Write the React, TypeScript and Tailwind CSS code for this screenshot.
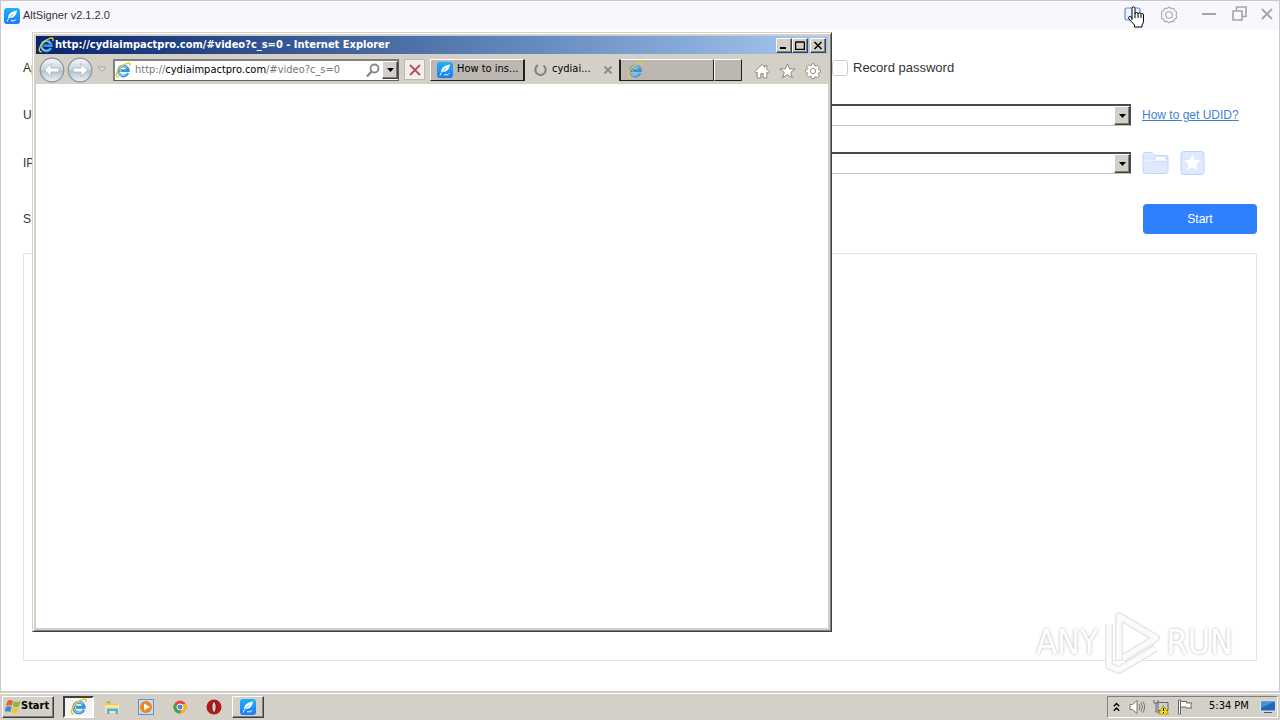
import type { ReactNode } from "react";

const tahoma = "font-['DejaVu_Sans_Condensed','DejaVu_Sans',sans-serif]";
const raised =
  "border border-t-white border-l-white border-r-[#404040] border-b-[#404040] bg-[#d4d0c8] shadow-[inset_-1px_-1px_0_#808080]";

function FeatherIcon({ size = 16 }: { size?: number }) {
  return (
    <svg width={size} height={size} viewBox="0 0 16 16" aria-hidden="true" className="shrink-0">
      <defs>
        <linearGradient id="feather" x1="0" y1="0" x2="0" y2="1">
          <stop offset="0" stopColor="#1fb0ff" />
          <stop offset="1" stopColor="#1c7cf4" />
        </linearGradient>
      </defs>
      <rect width="16" height="16" rx="3" fill="url(#feather)" />
      <path d="M13 2.500C8.500 3 5 5 4.300 8.500L3.800 11l1.200-1c4.300.2 7.300-2.200 8-7.500z" fill="#fff" />
      <path d="M3 13.500C4.600 10.300 6.800 8 9.500 6.200" stroke="#2494fb" strokeWidth=".7" fill="none" />
      <path d="M3 13.500l1.500-3" stroke="#fff" strokeWidth=".9" fill="none" />
      <path d="M7 12.800h3.700l1.300-1.500" stroke="#fff" strokeWidth="1" fill="none" />
    </svg>
  );
}

function ExplorerIcon({ size = 16 }: { size?: number }) {
  return (
    <svg width={size} height={size} viewBox="0 0 16 16" aria-hidden="true" className="shrink-0">
      <path
        d="M13 11A5 5 0 1 1 13.400 8.700H5.500"
        fill="none"
        stroke="#3493dc"
        strokeWidth="2.700"
      />
      <path d="M12.300 11.300A4.900 4.900 0 0 1 3.500 10M4.200 6.300a4.700 4.700 0 0 1 7.800-.5" fill="none" stroke="#7fd0f7" strokeWidth="1.100" />
      <path
        d="M3.800 14.700C-.5 15.500.8 9.500 6 4.800 10 1.300 14.300.1 15 1.700c.3.800.1 1.500-.3 2.300"
        fill="none"
        stroke="#f0c630"
        strokeWidth="1.400"
      />
    </svg>
  );
}

function GearIcon({ size, stroke, fill }: { size: number; stroke: string; fill: string }) {
  return (
    <svg width={size} height={size} viewBox="0 0 18 18" aria-hidden="true" fill={fill} stroke={stroke}>
      <path d="M7.500 1h3l.5 2.200 1.200.5 1.900-1.200 2.100 2.100L15 6.500l.5 1.200 2 .4v2.600l-2.100.5-.5 1.200 1.200 1.900-2.100 2.100-1.800-1.200-1.300.5-.4 1.800h-3L7 15.200l-1.200-.5-1.900 1.200-2-2.100L3 12l-.5-1.200-2-.5V7.700l2.100-.4L3 6 1.900 4.200 4 2.100l1.800 1.200L7 2.900z" />
      <circle cx="9" cy="9" r="3" />
    </svg>
  );
}

function DownArrow() {
  return (
    <svg width="7" height="4" viewBox="0 0 7 4" aria-hidden="true">
      <path d="M0 0h7L3.500 4z" fill="#000" />
    </svg>
  );
}

function Combo({ id }: { id: string }) {
  return (
    <div className="grid h-[22px] flex-1 grid-rows-1 border border-t-2 border-[#c4c4c4] border-t-[#4a4a4a] border-r-[#505050]">
      <select id={id} className="col-start-1 row-start-1 h-full w-full appearance-none bg-white outline-none" />
      <span
        className={`${raised} pointer-events-none col-start-1 row-start-1 flex w-4 items-center justify-center justify-self-end`}
      >
        <DownArrow />
      </span>
    </div>
  );
}

function AltSigner() {
  return (
    <main className="flex flex-1 flex-col border border-b-0 border-[#c9c9cc] bg-white font-['Liberation_Sans',Arial,sans-serif] text-[12px] text-[#333]">
      <header className="flex h-[29px] shrink-0 items-center bg-[#f8f8fc] pr-[6px] pl-[3px]">
        <FeatherIcon />
        <h1 className="ml-[3px] flex-1 text-[11px]">AltSigner v2.1.2.0</h1>
        <div className="flex items-center pb-1 text-[#a3a3a8]">
          <button aria-label="Tutorial" className="mr-[19px]">
            <svg width="17" height="14" viewBox="0 0 17 14" fill="#eef4ff" stroke="#5b8bd8" strokeWidth="1.200">
              <rect x="1" y="1" width="15" height="12" rx="2" />
              <path d="M8.500 1v12" />
            </svg>
          </button>
          <button aria-label="Settings" className="mr-6 pt-[2px]">
            <svg width="18" height="18" viewBox="0 0 18 18" fill="none" stroke="#aaa" strokeWidth="1.100">
              <path d="M9 1l2 1.500 2.500-.2 1 2.300 2.100 1.300L16.200 9l.4 3-2.100 1.300-1 2.300-2.500-.2L9 17l-2-1.600-2.500.2-1-2.300L1.400 12 1.800 9l-.4-3 2.100-1.400 1-2.300 2.500.2z" strokeLinejoin="round" />
              <circle cx="9" cy="9" r="3.300" />
            </svg>
          </button>
          <button aria-label="Minimize" className="mr-4">
            <svg width="14" height="16" viewBox="0 0 14 16" stroke="currentColor" strokeWidth="2">
              <path d="M0 8h14" />
            </svg>
          </button>
          <button aria-label="Restore" className="mr-[14px]">
            <svg width="15" height="16" viewBox="0 0 15 16" fill="none" stroke="currentColor" strokeWidth="1.600">
              <path d="M1 5h9v9H1zM4.500 5V1H14v9.500h-4" />
            </svg>
          </button>
          <button aria-label="Close">
            <svg width="12" height="16" viewBox="0 0 12 16" stroke="currentColor" strokeWidth="1.800">
              <path d="M1 3l10 10M11 3L1 13" />
            </svg>
          </button>
        </div>
      </header>

      <div className="flex flex-1 flex-col px-[22px] pt-[26px] pb-[30px]">
        <div className="flex h-6 items-center">
          <label htmlFor="account" className="w-20">Ap</label>
          <input id="account" className="min-w-0 flex-1 outline-none" />
        </div>
        <div className="mt-6 flex h-[22px] items-center">
          <label htmlFor="udid" className="w-20">U</label>
          <Combo id="udid" />
          <a href="#udid" className="ml-[11px] w-[115px] text-[#3f7fd0] underline">
            How to get UDID?
          </a>
        </div>
        <div className="mt-[26px] flex h-[22px] items-center">
          <label htmlFor="ipa" className="w-20">IP</label>
          <Combo id="ipa" />
          <div className="ml-[11px] flex w-[115px] items-center gap-[11px]">
            <button aria-label="Open file">
              <svg width="27" height="24" viewBox="0 0 27 24" fill="#dfe9fd" stroke="#c3d5fa">
                <path d="M1 3.500Q1 1.500 3 1.500h7l3 3h11q2 0 2 2V20q0 2.500-2.500 2.500h-20Q1 22.500 1 20z" />
                <rect x="13" y="5" width="11" height="5" rx="1.500" fill="#fff" />
                <path d="M1.500 9.500h24" stroke="#e9f0fe" />
              </svg>
            </button>
            <button aria-label="Favorites">
              <svg width="25" height="24" viewBox="0 0 25 24" fill="#dfe9fd" stroke="#bed2fa">
                <rect x="1" y=".5" width="23" height="23" rx="3" />
                <path d="M12.500 3.500l2.400 5.300 5.800.7-4.300 3.900 1.200 5.700-5.100-2.900-5.100 2.900 1.200-5.700-4.300-3.900 5.800-.7z" fill="#fff" stroke="none" />
              </svg>
            </button>
          </div>
        </div>
        <div className="mt-[30px] flex h-[30px] items-center justify-between">
          <span>S</span>
          <button className="h-[30px] w-[114px] rounded bg-[#2f80ff] text-white">Start</button>
        </div>
        <section aria-label="Log" className="mt-[19px] flex-1 border border-[#e2e2e4]" />
      </div>
    </main>
  );
}

function NavArrow({ back = false }: { back?: boolean }) {
  return (
    <svg width="26" height="26" viewBox="0 0 26 26" aria-hidden="true">
      <defs>
        <linearGradient id="orb" x1="0" y1="0" x2="0" y2="1">
          <stop offset="0" stopColor="#f4f7fa" />
          <stop offset=".45" stopColor="#cdd7e0" />
          <stop offset=".55" stopColor="#b4c3d0" />
          <stop offset="1" stopColor="#e6f5fb" />
        </linearGradient>
      </defs>
      <circle cx="13" cy="13" r="11.800" fill="url(#orb)" stroke="#8b949c" strokeWidth="1.200" />
      <path
        d={back ? "M5.500 13l6.500-6.500V11h8v4h-8v4.500z" : "M20.500 13L14 6.500V11H6v4h8v4.500z"}
        fill="#fff"
        stroke="#a4b2bf"
        strokeWidth=".8"
      />
    </svg>
  );
}

function CaptionButton({ label, children }: { label: string; children: ReactNode }) {
  return (
    <button aria-label={label} className={`${raised} flex h-[15px] w-4 items-center justify-center`}>
      <svg width="10" height="9" viewBox="0 0 10 9" fill="none" stroke="#000">
        {children}
      </svg>
    </button>
  );
}

function Browser() {
  return (
    <section
      aria-label="Internet Explorer"
      className={`absolute top-8 left-8 flex h-[600px] w-[800px] flex-col border border-t-[#d4d0c8] border-l-[#d4d0c8] border-r-[#404040] border-b-[#404040] bg-[#d4d0c8] p-[3px] text-[11px] text-black shadow-[inset_1px_1px_0_#fff,inset_-1px_-1px_0_#808080] ${tahoma}`}
    >
      <div className="flex h-[18px] shrink-0 items-center bg-linear-to-r from-[#0a246a] to-[#a6caf0] pr-[2px] pl-[2px] text-white">
        <ExplorerIcon />
        <h2 className="ml-[1px] flex-1 font-bold whitespace-nowrap">
          http://cydiaimpactpro.com/#video?c_s=0 - Internet Explorer
        </h2>
        <CaptionButton label="Minimize window">
          <path d="M1 7h6" strokeWidth="2" />
        </CaptionButton>
        <CaptionButton label="Maximize window">
          <path d="M.5 1h9M.5 1v7.500h9V1" strokeWidth="1.500" />
        </CaptionButton>
        <span className="w-[2px]" />
        <CaptionButton label="Close window">
          <path d="M1.500 1l7 7M8.500 1l-7 7" strokeWidth="1.500" />
        </CaptionButton>
      </div>

      <div className="flex h-[30px] shrink-0 items-center pt-[1px] pl-[3px]">
        <button aria-label="Back"><NavArrow back /></button>
        <button aria-label="Forward" className="ml-[2px]"><NavArrow /></button>
        <button aria-label="Recent pages" className="ml-1">
          <svg width="10" height="7" viewBox="0 0 10 7" fill="#e4e2dd" stroke="#aaa59c">
            <path d="M1 1h8L5 5.500z" />
          </svg>
        </button>
        <form className="ml-[6px] flex h-[22px] w-[286px] items-center border border-t-2 border-l-2 border-[#808080] border-r-[#606060] border-b-[#606060] bg-white">
          <ExplorerIcon />
          <div className="ml-1 flex-1 whitespace-nowrap text-[#777]">
            http://<span className="text-black">cydiaimpactpro.com</span>/#video?c_s=0
          </div>
          <button type="button" aria-label="Search" className="mr-[2px]">
            <svg width="14" height="15" viewBox="0 0 14 15" fill="none" stroke="#858585" strokeWidth="1.800">
              <circle cx="8.500" cy="5.500" r="4" />
              <path d="M5.500 8.500L1 13.500" strokeWidth="2.300" />
            </svg>
          </button>
          <button type="button" aria-label="Show addresses" className={`${raised} flex h-[18px] w-4 items-center justify-center`}>
            <DownArrow />
          </button>
        </form>
        <button aria-label="Stop" className="ml-[5px] flex h-[21px] w-[21px] items-center justify-center border border-[#bdb9b2] bg-[#f0efed]">
          <svg width="12" height="12" viewBox="0 0 12 12" stroke="#c04a55" strokeWidth="1.800">
            <path d="M1 1l10 10M11 1L1 11" />
          </svg>
        </button>
        <nav className="ml-[5px] flex items-center">
          <button className="flex h-[22px] w-[95px] items-center border border-r-2 border-t-white border-l-white border-r-[#202020] border-b-[#202020] bg-[#bcb8b1] pl-[6px] whitespace-nowrap">
            <FeatherIcon />
            <span className="ml-1">How to ins...</span>
          </button>
          <button className="flex h-[22px] w-[94px] items-center pl-2 whitespace-nowrap">
            <svg width="14" height="14" viewBox="0 0 14 14" fill="none" stroke="#7e7e7e" strokeWidth="2" aria-hidden="true">
              <path d="M10.500 2.500A5.200 5.200 0 1 1 5 2.200" />
            </svg>
            <span className="ml-[5px] flex-1 text-left">cydiai...</span>
            <svg width="8" height="8" viewBox="0 0 8 8" stroke="#8c8c8c" strokeWidth="2" className="mr-[7px]" aria-hidden="true">
              <path d="M.5.5l7 7M7.500.5l-7 7" />
            </svg>
          </button>
          <button aria-label="Blank page" className="flex h-[22px] w-[95px] items-center border border-l-2 border-t-white border-l-[#202020] border-r-[#202020] border-b-[#202020] bg-[#bcb8b1] pl-[6px]">
            <ExplorerIcon />
          </button>
          <button aria-label="New tab" className="h-[22px] w-[28px] border border-t-white border-l-white border-r-[#202020] border-b-[#202020] bg-[#bcb8b1]" />
        </nav>
        <div className="ml-auto flex items-center gap-[9px] pt-[2px] pr-[7px]">
          <button aria-label="Home">
            <svg width="16" height="16" viewBox="0 0 16 16" fill="#fff" stroke="#8d8982">
              <path d="M8 1.500L.8 8.600l1.500 1.300.9-.7V15h3.600v-4.500h2.400V15h3.600V9.200l.9.700 1.500-1.300-2.400-2.400V2.500h-2v1.700z" />
            </svg>
          </button>
          <button aria-label="Favorites bar">
            <svg width="17" height="16" viewBox="0 0 17 16" fill="#fff" stroke="#8d8982">
              <path d="M8.500.9l2.100 5h5.500l-4.400 3.500 1.600 5.400-4.800-3.200-4.800 3.200 1.600-5.400L.9 5.900h5.500z" />
            </svg>
          </button>
          <button aria-label="Tools"><GearIcon size={16} stroke="#8d8982" fill="#fff" /></button>
        </div>
      </div>
      <div className="flex-1 bg-white" />
    </section>
  );
}

function Watermark() {
  return (
    <div
      aria-hidden="true"
      className={`pointer-events-none absolute right-[47px] bottom-[46px] flex items-center gap-1 text-[34px] leading-none text-white [text-shadow:0_0_3px_#b4b4b4] ${tahoma}`}
    >
      <span>ANY</span>
      <svg width="60" height="64" viewBox="0 0 60 64" fill="none" strokeLinejoin="round">
        <g stroke="#e6e6e6" strokeWidth="8">
          <path d="M17 50V6l37 22-33 20M7 14v42l10 4 37-22" />
        </g>
        <g stroke="#fbfbfb" strokeWidth="5">
          <path d="M17 50V6l37 22-33 20M7 14v42l10 4 37-22" />
        </g>
      </svg>
      <span>RUN</span>
    </div>
  );
}

function Taskbar() {
  const slot = "flex h-[22px] w-8 items-center justify-center";
  return (
    <footer className={`flex h-[29px] shrink-0 items-center border-t-2 border-[#cfccc8] bg-[#d4d0c8] px-[2px] text-[11px] text-black shadow-[inset_0_1px_0_#fff] ${tahoma}`}>
      <button className={`${raised} flex h-[22px] w-[52px] items-center pl-[2px] font-bold`}>
        <svg width="16" height="15" viewBox="0 0 16 15" aria-hidden="true" className="shrink-0">
          <path d="M2.500 2Q5 .2 8 1.800L6.800 6.800Q4 5.400 1 7z" fill="#e6632b" />
          <path d="M9 2.200Q12 3.700 15.500 2L14 7.200Q11 8.700 7.800 7.200z" fill="#83b83c" />
          <path d="M.8 8Q4 6.500 6.500 7.900L5.300 13Q2.500 11.500-.3 13z" fill="#3f87d3" />
          <path d="M7.500 8.300Q10.500 9.800 13.700 8.200L12.300 13.300Q9.300 14.800 6.300 13.300z" fill="#f5c32f" />
        </svg>
        <span>Start</span>
      </button>
      <div className="ml-[9px] flex items-center gap-[2px]">
        <button aria-label="Internet Explorer" className="flex h-[22px] w-[31px] items-center justify-center border-2 border-t-[#404040] border-l-[#404040] border-r-white border-b-white bg-[#f5f4f2]">
          <ExplorerIcon size={17} />
        </button>
        <button aria-label="Explorer" className={slot}>
          <svg width="16" height="16" viewBox="0 0 16 16">
            <path d="M1 3h5l1 1.500h7V14H1z" fill="#e9c75c" />
            <path d="M1 6h14v8H1z" fill="#f7e6a0" />
            <path d="M3 15V9.500h11V15h-2.500v-3h-6v3z" fill="#55aee0" />
            <path d="M3 3.200h3" stroke="#5aa846" />
          </svg>
        </button>
        <button aria-label="Media Player" className={slot}>
          <svg width="16" height="16" viewBox="0 0 16 16">
            <rect x=".5" y=".5" width="15" height="15" fill="#c2def5" stroke="#5a96cf" />
            <circle cx="8" cy="8" r="6" fill="#f28418" />
            <path d="M6 4.500l6 3.500-6 3.500z" fill="#fff" />
          </svg>
        </button>
        <button aria-label="Chrome" className={slot}>
          <svg width="14" height="14" viewBox="0 0 14 14">
            <circle cx="7" cy="7" r="6.500" fill="#eb4335" />
            <path d="M7 7L1.400 3.700A6.500 6.500 0 0 0 6.700 13.500z" fill="#38a853" />
            <path d="M7 7h6.500A6.500 6.500 0 0 0 12.800 4H7zM7 7h6.500a6.500 6.500 0 0 1-6.800 6.500L9.600 8.500z" fill="#fabc05" />
            <circle cx="7" cy="7" r="3" fill="#4285f4" stroke="#fff" />
          </svg>
        </button>
        <button aria-label="Opera" className={slot}>
          <svg width="16" height="16" viewBox="0 0 16 16">
            <circle cx="8" cy="8" r="7.500" fill="#b3161b" />
            <ellipse cx="8" cy="8" rx="2.200" ry="5.500" fill="#d4d0c8" stroke="#6f0c10" />
          </svg>
        </button>
        <button aria-label="AltSigner" className={`${raised} flex h-[22px] w-[32px] items-center justify-center`}>
          <FeatherIcon />
        </button>
      </div>
      <div className="ml-auto flex h-[22px] w-[171px] items-center border border-t-[#808080] border-l-[#808080] border-r-white border-b-white pl-[5px]">
        <button aria-label="Show hidden icons">
          <svg width="7" height="10" viewBox="0 0 7 10" fill="none" stroke="#000" strokeWidth="1.400">
            <path d="M.8 4.200L3.500 1.500l2.700 2.700M.8 8.700L3.500 6l2.700 2.700" />
          </svg>
        </button>
        <svg width="16" height="16" viewBox="0 0 16 16" aria-hidden="true" className="ml-[9px]" fill="#fff" stroke="#777">
          <path d="M1 5.500h2.500L8 1.500v13l-4.500-4H1z" />
          <path d="M10 5q2 3 0 6M12 3.500q3 4.500 0 9M14 2.500q3.200 5.500 0 11" fill="none" />
        </svg>
        <svg width="16" height="16" viewBox="0 0 16 16" aria-hidden="true" className="ml-2" fill="#fff" stroke="#666">
          <path d="M5 3.500h10v8H5z" fill="#c8d0d8" />
          <path d="M1 1v3h4V1M3 4v9h4M7 14h5" fill="none" />
          <path d="M10.500 6.500l5 8.500h-10z" fill="#ffdc18" stroke="#b49500" />
          <path d="M10.500 9v3M10.500 13v1" stroke="#000" />
        </svg>
        <svg width="16" height="16" viewBox="0 0 16 16" aria-hidden="true" className="ml-2" fill="#fff" stroke="#666">
          <path d="M1.500 1h2v14h-2z" />
          <path d="M3.500 2.500h6V4H15l-1.500 2.500L15 9H9V8H3.500z" />
        </svg>
        <time className="ml-4 flex-1 whitespace-nowrap">5:34 PM</time>
        <svg width="16" height="14" viewBox="0 0 16 14" aria-hidden="true" className="mr-[1px]">
          <rect x=".5" y="1" width="15" height="10" fill="#2267b8" stroke="#dce6ef" />
          <path d="M1 1.500h14L1 8z" fill="#4a92d8" />
          <path d="M4 12.500h8" stroke="#555" />
        </svg>
      </div>
    </footer>
  );
}

export default function App() {
  return (
    <div className="relative flex min-h-screen flex-col overflow-hidden">
      <AltSigner />
      <Taskbar />
      <Browser />
      <label className="absolute top-[60px] left-[832px] flex h-4 items-center font-['Liberation_Sans',Arial,sans-serif] text-[13px] text-[#333]">
        <input type="checkbox" className="h-4 w-4 appearance-none rounded-[3px] border border-[#ccc] bg-white" />
        <span className="ml-[5px]">Record password</span>
      </label>
      <Watermark />
      <svg width="18" height="22" viewBox="0 0 18 22" aria-hidden="true" className="pointer-events-none absolute top-[6px] right-[135px]">
        <path
          d="M5 14V2.500Q5 .8 6.500.8T8 2.500V8q0-1.500 1.300-1.500T11 8q0-1.200 1.300-1.200T14 8.500q0-1 1.200-1T16.500 9v6q0 2-1.500 4v2H7.500v-2L2 13q-1.500-2 .3-2.500T5 12.500"
          fill="#fff"
          stroke="#000"
        />
        <path d="M8 8v4M11 8v4M14 9v3" stroke="#000" />
      </svg>
    </div>
  );
}
